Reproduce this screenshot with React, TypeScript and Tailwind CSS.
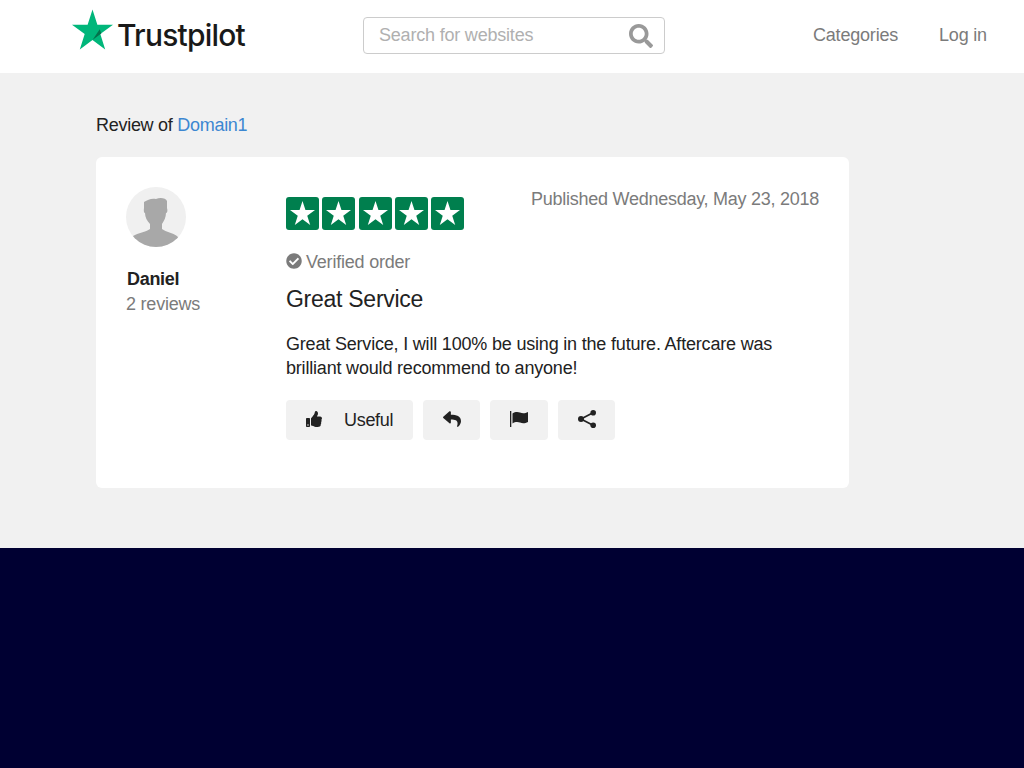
import { FaCheckCircle, FaReply, FaSearch, FaThumbsUp } from "react-icons/fa";

function Logo() {
  return (
    <div className="flex items-start ml-[72px] w-[174px] h-[44px] mt-[9px]">
      <svg width="41" height="41" viewBox="0 0 42 41" className="shrink-0">
        <path d="M21 0l5 15.6h16l-13 9.5 5 15.9-13-9.8-13 9.8 5-15.9L0 15.6h16z" fill="#00b67a" />
        <path d="M30 24.6l-1.6-4.4L21 31.2z" fill="#04724c" />
      </svg>
      <span className="ml-[4px] mt-[8px] text-[30px] leading-[36px] font-medium tracking-[-0.8px] text-[#191919] font-['Inter',sans-serif]">
        Trustpilot
      </span>
    </div>
  );
}

function Header() {
  return (
    <header className="h-[73px] bg-white flex items-start">
      <Logo />
      <div className="ml-[117px] mt-[17px] w-[302px] h-[37px] border border-[#cccccc] rounded-[4px] flex items-center justify-between pl-[15px] pr-[11px]">
        <span className="text-[18px] tracking-[-0.2px] text-[#b0b0b0]">Search for websites</span>
        <FaSearch className="w-[24px] h-[24px] text-[#999999] mt-[1px]" />
      </div>
      <nav className="ml-[148px] mt-[23px] flex gap-[41px] text-[18px] leading-[24px] tracking-[-0.2px] text-[#7b7b7b]">
        <a>Categories</a>
        <a>Log in</a>
      </nav>
    </header>
  );
}

function Stars() {
  return (
    <div className="flex gap-[3.25px]">
      {[0, 1, 2, 3, 4].map((i) => (
        <div key={i} className="w-[33px] h-[33px] bg-[#007f4e] rounded-[3px] flex items-center justify-center">
          <svg width="25" height="24" viewBox="0 0 25 24" className="-mt-[1px]">
            <path d="M12.5 0l2.95 9.1H25l-7.75 5.65L20.2 24l-7.7-5.7L4.8 24l2.95-9.25L0 9.1h9.55z" fill="#ffffff" />
          </svg>
        </div>
      ))}
    </div>
  );
}

function FlagIcon() {
  return (
    <svg width="18" height="16" viewBox="0 0 18 16" className="-mt-[2px]">
      <rect x="0" y="0" width="1.3" height="16" fill="#222222" />
      <path d="M2.5 2.5C5 .7 8 .7 10 1.6c2.5 1 5 1 8-.6v10c-3 1.6-5.5 1.6-8 .6-2-.9-5-.9-7.5.9z" fill="#222222" />
    </svg>
  );
}

function ShareIcon() {
  return (
    <svg width="18" height="18" viewBox="0 0 18 18" className="-mt-[2px]">
      <path d="M3 9L15 2.8M3 9l12 6.2" stroke="#222222" strokeWidth="1.7" fill="none" />
      <circle cx="3" cy="9" r="3" fill="#222222" />
      <circle cx="15.2" cy="2.8" r="2.8" fill="#222222" />
      <circle cx="15.2" cy="15.2" r="2.8" fill="#222222" />
    </svg>
  );
}

function ReviewCard() {
  return (
    <div className="w-[753px] h-[331px] bg-white rounded-[6px] flex pt-[30px] pl-[30px] pr-[30px]">
      <div className="w-[160px] shrink-0">
        <div className="w-[60px] h-[60px] rounded-full bg-[#f0f0f0] overflow-hidden">
          <svg viewBox="0 0 60 60" width="60" height="60">
            <path
              d="M0 60L7 49C12 46 20 45 24 42V37C21 34 19 30 19 26C18 26 17.5 24 18 21V15C22 13 25 11 30 12C34 10 40 11 41 14V21C42 24 41 26 40 26C40 30 38 34 36 37V42C40 45 47 46 51 49L60 60Z"
              fill="#a8a8a8"
            />
          </svg>
        </div>
        <div className="mt-[20px] ml-px text-[18px] leading-[24px] font-bold tracking-[-0.3px] text-[#222222]">Daniel</div>
        <div className="mt-px text-[18px] leading-[24px] tracking-[-0.22px] text-[#7b7b7b]">2 reviews</div>
      </div>
      <div className="flex-1">
        <div className="flex justify-between pt-[10px]">
          <Stars />
          <span className="-mt-[10px] text-[18px] leading-[24px] tracking-[-0.26px] text-[#7b7b7b]">Published Wednesday, May 23, 2018</span>
        </div>
        <div className="mt-[20px] flex items-center gap-[4px] text-[18px] leading-[24px] tracking-[-0.21px] text-[#7b7b7b]">
          <FaCheckCircle className="w-[16px] h-[16px] -mt-[3px]" />
          <span>Verified order</span>
        </div>
        <h2 className="mt-[11px] text-[23px] leading-[28px] tracking-[-0.27px] text-[#222222]">Great Service</h2>
        <p className="mt-[19px] text-[18px] leading-[24px] tracking-[-0.19px] text-[#222222]">
          Great Service, I will 100% be using in the future. Aftercare was
          <br />
          brilliant would recommend to anyone!
        </p>
        <div className="mt-[20px] flex gap-[10px] text-[#222222]">
          <button className="w-[127px] h-[40px] bg-[#f1f1f1] rounded-[4px] flex items-center pl-[20px]">
            <FaThumbsUp className="w-[16px] h-[16px] -mt-[2px]" />
            <span className="ml-[22px] text-[18px] tracking-[-0.3px]">Useful</span>
          </button>
          <button className="w-[57px] h-[40px] bg-[#f1f1f1] rounded-[4px] flex items-center justify-center">
            <FaReply className="w-[18px] h-[18px] -mt-[2px]" />
          </button>
          <button className="w-[58px] h-[40px] bg-[#f1f1f1] rounded-[4px] flex items-center justify-center">
            <FlagIcon />
          </button>
          <button className="w-[57px] h-[40px] bg-[#f1f1f1] rounded-[4px] flex items-center justify-center">
            <ShareIcon />
          </button>
        </div>
      </div>
    </div>
  );
}

export default function App() {
  return (
    <div className="min-h-[768px] flex flex-col font-['Liberation_Sans',Arial,sans-serif]">
      <Header />
      <main className="h-[475px] bg-[#f1f1f1] pl-[96px] pt-[40px]">
        <div className="text-[18px] leading-[24px] h-[44px] tracking-[-0.28px] text-[#222222]">
          Review of <a className="text-[#3c87d1]">Domain1</a>
        </div>
        <ReviewCard />
      </main>
      <footer className="flex-1 bg-[#000032]" />
    </div>
  );
}
